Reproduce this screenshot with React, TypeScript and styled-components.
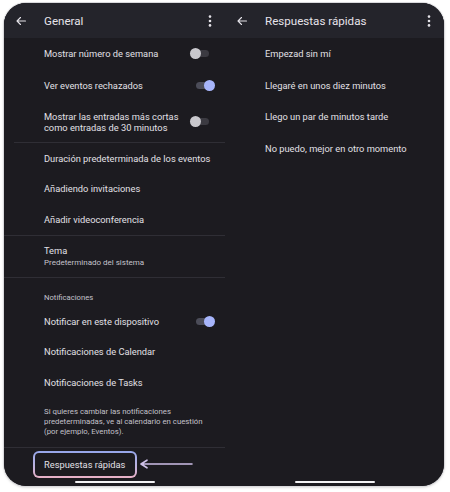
import styled, { createGlobalStyle } from "styled-components";

const GlobalStyle = createGlobalStyle`
  html, body {
    margin: 0;
    padding: 0;
    background: #ffffff;
  }
  body {
    font-family: "Roboto", "Noto Sans", sans-serif;
  }
`;

export default function App() {
  return (
    <Page>
      <GlobalStyle />
      <Screen>
        <Panel>
          <TopBar>
            <BackArrow />
            <TopTitle>General</TopTitle>
            <Kebab />
          </TopBar>

          <Row $h={31}>
            <RowText>Mostrar número de semana</RowText>
            <Toggle $on={false} />
          </Row>
          <Row $h={32}>
            <RowText>Ver eventos rechazados</RowText>
            <Toggle $on />
          </Row>
          <Row $h={41}>
            <RowText>
              Mostrar las entradas más cortas
              <br />
              como entradas de 30 minutos
            </RowText>
            <Toggle $on={false} />
          </Row>
          <Divider $inset={10} />
          <Row $h={30}>
            <RowText>Duración predeterminada de los eventos</RowText>
          </Row>
          <Row $h={31}>
            <RowText>Añadiendo invitaciones</RowText>
          </Row>
          <Row $h={31}>
            <RowText>Añadir videoconferencia</RowText>
          </Row>
          <Divider $inset={0} />
          <Row $h={41}>
            <TwoLine>
              <RowText>Tema</RowText>
              <SubText>Predeterminado del sistema</SubText>
            </TwoLine>
          </Row>
          <Divider $inset={0} />
          <SectionLabel>Notificaciones</SectionLabel>
          <Row $h={30}>
            <RowText>Notificar en este dispositivo</RowText>
            <Toggle $on />
          </Row>
          <Row $h={31}>
            <RowText>Notificaciones de Calendar</RowText>
          </Row>
          <Row $h={30}>
            <RowText>Notificaciones de Tasks</RowText>
          </Row>
          <InfoText>
            Si quieres cambiar las notificaciones
            <br />
            predeterminadas, ve al calendario en cuestión
            <br />
            (por ejemplo, Eventos).
          </InfoText>
          <Divider $inset={0} />
          <CalloutRow>
            <HighlightFrame>
              <HighlightInner>Respuestas rápidas</HighlightInner>
            </HighlightFrame>
            <PointerArrow />
          </CalloutRow>
          <GestureBar />
        </Panel>

        <Panel>
          <TopBar>
            <BackArrow />
            <TopTitle>Respuestas rápidas</TopTitle>
            <Kebab />
          </TopBar>
          <Row $h={31}>
            <RowText>Empezad sin mí</RowText>
          </Row>
          <Row $h={32}>
            <RowText>Llegaré en unos diez minutos</RowText>
          </Row>
          <Row $h={31}>
            <RowText>Llego un par de minutos tarde</RowText>
          </Row>
          <Row $h={32}>
            <RowText>No puedo, mejor en otro momento</RowText>
          </Row>
          <GestureBar />
        </Panel>
      </Screen>
    </Page>
  );
}

function BackArrow() {
  return (
    <IconSlot>
      <svg width="12" height="12" viewBox="0 0 24 24" fill="none">
        <path
          d="M21 12H4M11 5l-7 7 7 7"
          stroke="#e4e2e8"
          strokeWidth="2.2"
          strokeLinecap="round"
          strokeLinejoin="round"
        />
      </svg>
    </IconSlot>
  );
}

function Kebab() {
  return (
    <KebabSlot>
      <svg width="4" height="12" viewBox="0 0 4 12">
        <circle cx="2" cy="1.6" r="1.3" fill="#e4e2e8" />
        <circle cx="2" cy="6" r="1.3" fill="#e4e2e8" />
        <circle cx="2" cy="10.4" r="1.3" fill="#e4e2e8" />
      </svg>
    </KebabSlot>
  );
}

function Toggle({ $on }: { $on: boolean }) {
  return (
    <ToggleTrack $on={$on}>
      <ToggleThumb $on={$on} />
    </ToggleTrack>
  );
}

function PointerArrow() {
  return (
    <ArrowSlot>
      <svg width="54" height="10" viewBox="0 0 54 10" fill="none">
        <path
          d="M53 5H3M8 1.2L2 5l6 3.8"
          stroke="#cdbfe6"
          strokeWidth="1.6"
          strokeLinecap="round"
          strokeLinejoin="round"
        />
      </svg>
    </ArrowSlot>
  );
}

const Page = styled.div`
  padding: 3px 6px 6px 4px;
`;

const Screen = styled.div`
  display: grid;
  grid-template-columns: 221px 219px;
  width: 440px;
  height: 483px;
  border-radius: 22px;
  overflow: hidden;
  background: #1c1b20;
  box-shadow: 0 0 0 1px #d9d9dc, 0 1px 3px rgba(0, 0, 0, 0.25);
`;

const Panel = styled.div`
  display: flex;
  flex-direction: column;
  min-width: 0;
  background: #1c1b20;
`;

const TopBar = styled.div`
  display: flex;
  align-items: center;
  height: 35px;
  flex-shrink: 0;
  background: #24242b;
  padding: 0 10px 0 11px;
`;

const IconSlot = styled.div`
  display: flex;
  align-items: center;
  width: 29px;
`;

const TopTitle = styled.div`
  flex: 1;
  font-size: 11.6px;
  color: #e6e3ea;
`;

const KebabSlot = styled.div`
  display: flex;
  align-items: center;
  justify-content: center;
  width: 8px;
  margin-right: 1px;
`;

const Row = styled.div<{ $h: number }>`
  display: flex;
  align-items: center;
  justify-content: space-between;
  height: ${(p) => p.$h}px;
  flex-shrink: 0;
  padding: 0 14px 0 40px;
`;

const RowText = styled.div`
  font-size: 9.3px;
  line-height: 11px;
  color: #e2e0e6;
  white-space: nowrap;
`;

const TwoLine = styled.div`
  display: flex;
  flex-direction: column;
  gap: 1px;
`;

const SubText = styled.div`
  font-size: 8px;
  line-height: 11px;
  color: #c5c3cc;
`;

const SectionLabel = styled.div`
  display: flex;
  align-items: center;
  height: 18px;
  padding: 10px 0 0 40px;
  font-size: 7.7px;
  color: #c3c2cc;
  flex-shrink: 0;
`;

const InfoText = styled.div`
  height: 50px;
  box-sizing: border-box;
  padding: 10px 10px 0 40px;
  font-size: 7.8px;
  line-height: 9.8px;
  color: #c3c1ca;
  flex-shrink: 0;
`;

const Divider = styled.div<{ $inset: number }>`
  height: 1px;
  flex-shrink: 0;
  margin-left: ${(p) => p.$inset}px;
  background: #2f2e35;
`;

const ToggleTrack = styled.div<{ $on: boolean }>`
  position: relative;
  width: 15px;
  height: 7px;
  border-radius: 4px;
  margin-right: ${(p) => (p.$on ? 0 : 2)}px;
  background: ${(p) => (p.$on ? "#4b4c58" : "#3b3a41")};
`;

const ToggleThumb = styled.div<{ $on: boolean }>`
  position: absolute;
  top: -2px;
  left: ${(p) => (p.$on ? 8 : -4)}px;
  width: 11px;
  height: 11px;
  border-radius: 50%;
  background: ${(p) => (p.$on ? "#a7b5fb" : "#c9c8cd")};
`;

const CalloutRow = styled.div`
  display: flex;
  align-items: center;
  gap: 2px;
  height: 32px;
  flex-shrink: 0;
  padding-left: 29px;
`;

const HighlightFrame = styled.div`
  padding: 2px;
  border-radius: 6px;
  background: linear-gradient(180deg, #96a6ea 0%, #b7b2e2 50%, #eab1c6 100%);
`;

const HighlightInner = styled.div`
  display: flex;
  align-items: center;
  height: 23px;
  width: 100px;
  box-sizing: border-box;
  padding-left: 9px;
  border-radius: 4px;
  background: #1c1b20;
  font-size: 9.3px;
  color: #e2e0e6;
  white-space: nowrap;
`;

const ArrowSlot = styled.div`
  display: flex;
  align-items: center;
`;

const GestureBar = styled.div`
  width: 80px;
  height: 2px;
  border-radius: 1px;
  background: #f2f2f4;
  margin: auto auto 3px;
  flex-shrink: 0;
`;
